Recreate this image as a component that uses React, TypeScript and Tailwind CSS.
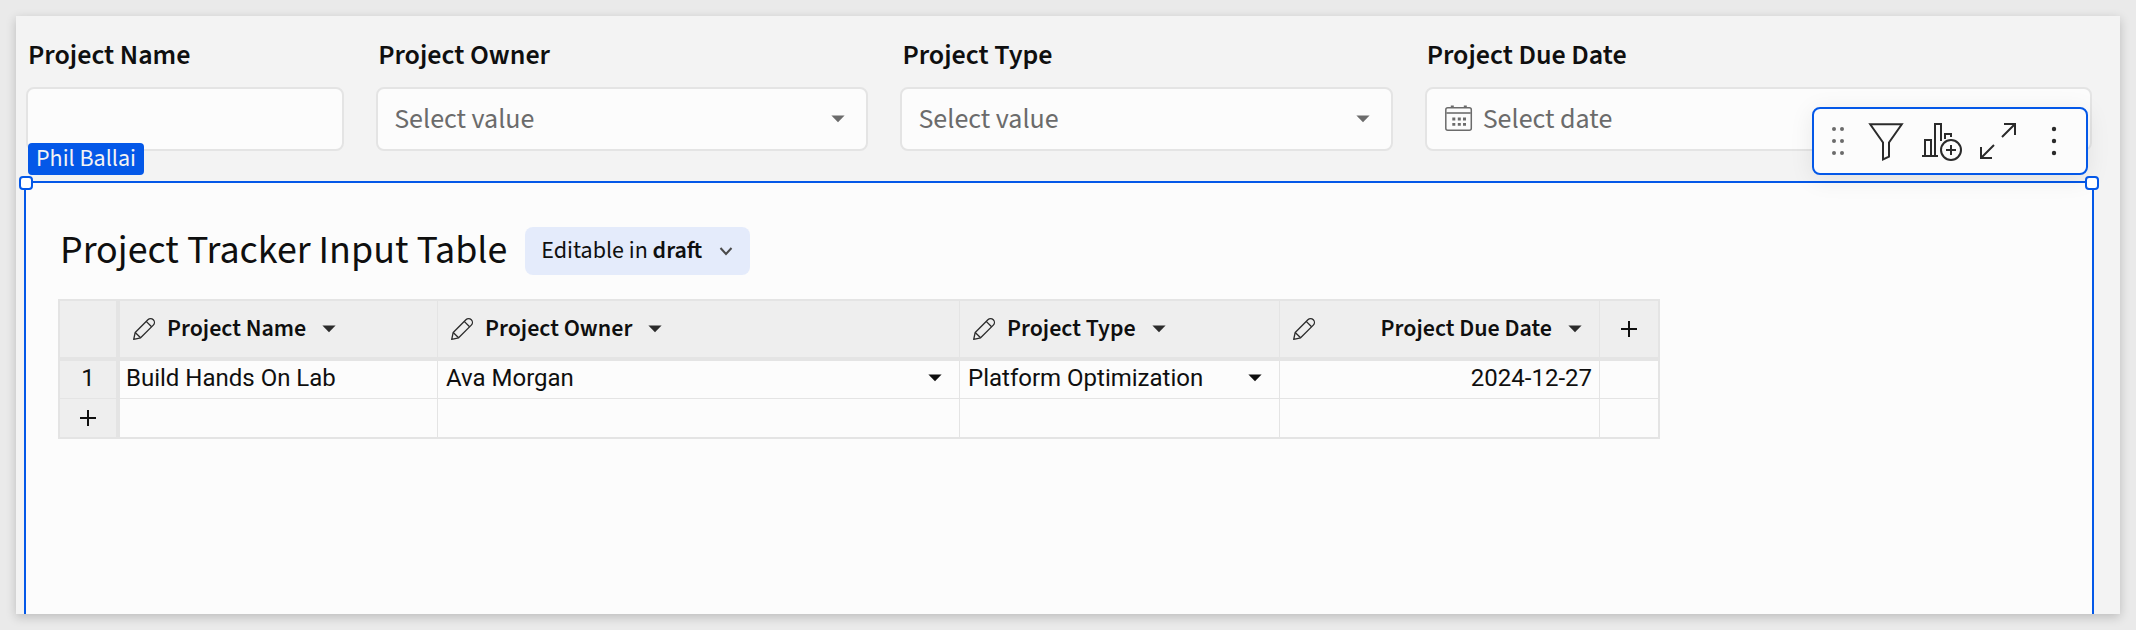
import type { ReactNode } from "react";

function Caret({ className = "" }: { className?: string }) {
  return (
    <svg viewBox="0 0 14 8" className={`h-2 w-3.5 shrink-0 ${className}`} aria-hidden="true">
      <path d="M.4 .5h13.2L7 7.3z" fill="currentColor" />
    </svg>
  );
}

function Pencil() {
  return (
    <svg viewBox="0 0 24 24" className="size-6 shrink-0 text-[#2b2b2b]" fill="none" stroke="currentColor" strokeWidth="1.3" strokeLinejoin="round" aria-hidden="true">
      <path d="M1.7 22.3l1.5-6.8L15.900 2.700a3.800 3.800 0 0 1 5.400 5.400L8.600 20.800z" />
      <path d="M3.200 15.500L8.600 20.800M14.200 4.400L19.600 9.800" />
    </svg>
  );
}

function Plus() {
  return (
    <svg viewBox="0 0 16 16" className="size-4" stroke="currentColor" strokeWidth="2" aria-hidden="true">
      <path d="M8 0v16M0 8h16" />
    </svg>
  );
}

function Calendar() {
  return (
    <svg viewBox="0 0 28 28" className="col-start-1 row-start-1 ml-5 size-7 text-[#6b6b6b]" fill="none" stroke="currentColor" aria-hidden="true">
      <rect x=".8" y="2.800" width="25.500" height="22.500" rx="2" strokeWidth="1.500" />
      <path d="M1 8h25" strokeWidth="2" stroke="#8a8a8a" />
      <path d="M7.300 .5v2M20.300 .5v2" strokeWidth="3" />
      <path d="M7.300 14h3M12.800 14h3M18 14h3M7.300 19.400h3M12.800 19.400h3M18 19.400h3" strokeWidth="2.800" />
    </svg>
  );
}

function Filter({ id, label, children }: { id: string; label: string; children: ReactNode }) {
  return (
    <div className="flex min-w-0 flex-col gap-3">
      <label htmlFor={id} className="pl-0.5 text-[28px] leading-10 font-semibold">
        {label}
      </label>
      <div className="grid grid-cols-1 items-center">{children}</div>
    </div>
  );
}

const box =
  "col-start-1 row-start-1 h-16 w-full appearance-none rounded-lg border-2 border-[#e4e4e4] bg-[#fcfcfc] text-[28px] text-[#6b6b6b] placeholder:text-[#6b6b6b] placeholder:opacity-100";

function SelectFilter({ id, label }: { id: string; label: string }) {
  return (
    <Filter id={id} label={label}>
      <select id={id} className={`${box} px-4`}>
        <option>Select value</option>
      </select>
      <Caret className="pointer-events-none col-start-1 row-start-1 mr-[23px] justify-self-end text-[#6b6b6b]" />
    </Filter>
  );
}

function ToolButton({ label, children }: { label: string; children: ReactNode }) {
  return (
    <button type="button" aria-label={label} className="flex h-16 w-14 items-center justify-center">
      <svg viewBox="0 0 40 40" className="size-10" fill="none" stroke="currentColor" strokeWidth="2">
        {children}
      </svg>
    </button>
  );
}

function Toolbar() {
  return (
    <div role="toolbar" aria-label="Element" className="absolute right-1 bottom-0 flex rounded-lg border-2 border-[#0458e8] bg-[#fcfcfc] px-1 text-[#2b2b2b] shadow-[0_4px_24px_rgba(0,0,0,0.08)]">
      <button type="button" aria-label="Drag" className="flex h-16 w-10 items-center justify-center text-[#6b6b6b]">
        <svg viewBox="0 0 12 28" className="h-7 w-3" fill="currentColor">
          <circle cx="2" cy="2" r="2" />
          <circle cx="10" cy="2" r="2" />
          <circle cx="2" cy="14" r="2" />
          <circle cx="10" cy="14" r="2" />
          <circle cx="2" cy="26" r="2" />
          <circle cx="10" cy="26" r="2" />
        </svg>
      </button>
      <ToolButton label="Filter">
        <path d="M4.200 3.200H35.800L23 21.500V35.700L17 38.400V21.500Z" />
      </ToolButton>
      <ToolButton label="Create chart">
        <path d="M0 35h16M3 35V19h6v16M13 35V3h6v17M23 18v-5h6v3" />
        <circle cx="29" cy="29" r="10" />
        <path d="M29 24v10M24 29h10" />
      </ToolButton>
      <ToolButton label="Maximize">
        <path d="M24 16L37 3M26 3h11v11M16 24L3 37M3 26v11h11" />
      </ToolButton>
      <ToolButton label="More">
        <g fill="currentColor" stroke="none">
          <circle cx="20" cy="8" r="2.200" />
          <circle cx="20" cy="20" r="2.200" />
          <circle cx="20" cy="32" r="2.200" />
        </g>
      </ToolButton>
    </div>
  );
}

const head = "h-[62px] border-t-2 border-b-4 border-[#e4e4e4] bg-[#eeeeee] p-0";
const cell = "border-[#e4e4e4] p-0 align-top";

function HeadCell({ name, right = false }: { name: string; right?: boolean }) {
  return (
    <th scope="col" className={`${head} border-r`}>
      <div className="flex items-center pl-3 text-left text-[24px] leading-8 font-semibold">
        <Pencil />
        <span className={right ? "mr-4 ml-auto" : "mr-4 ml-[11px]"}>{name}</span>
        <button type="button" aria-label={`${name} menu`} className={right ? "mr-[17px] text-[#2b2b2b]" : "text-[#2b2b2b]"}>
          <Caret />
        </button>
      </div>
    </th>
  );
}

function SelectCell({ label, value }: { label: string; value: string }) {
  return (
    <td className={`${cell} border-r border-b`}>
      <div className="grid grid-cols-1 items-center">
        <select aria-label={label} className="col-start-1 row-start-1 h-[34px] w-full appearance-none bg-transparent px-2">
          <option>{value}</option>
        </select>
        <Caret className="pointer-events-none col-start-1 row-start-1 mr-[17px] justify-self-end" />
      </div>
    </td>
  );
}

export default function App() {
  return (
    <div className="flex min-h-screen flex-col bg-[#eaeaea] p-4 font-['Source_Sans_3','Noto_Sans_CJK_SC',sans-serif] text-[#0f0f0f]">
      <main className="flex flex-1 flex-col bg-[#f3f3f3] pt-[19px] pr-[26px] pl-2 shadow-[0_3px_10px_rgba(0,0,0,0.2)]">
        <form className="grid grid-cols-[318fr_492fr_492fr_667fr] gap-8 px-0.5">
          <Filter id="name" label="Project Name">
            <input id="name" type="text" className={`${box} px-4`} />
          </Filter>
          <SelectFilter id="owner" label="Project Owner" />
          <SelectFilter id="type" label="Project Type" />
          <Filter id="due" label="Project Due Date">
            <input id="due" type="text" placeholder="Select date" className={`${box} pr-4 pl-14`} />
            <Calendar />
          </Filter>
        </form>

        <section className="relative mt-[30px] flex-1 border-2 border-b-0 border-[#0458e8] bg-[#fcfcfc] px-8 pt-11 pb-10">
          <span className="absolute -top-10 left-0.5 rounded bg-[#0458e8] px-2 text-[24px] leading-8 text-[#f3f3f3]">Phil Ballai</span>
          <span className="absolute -top-[7px] -left-[7px] size-3.5 rounded border-2 border-[#0458e8] bg-white" />
          <div className="absolute -top-2 right-0">
            <Toolbar />
          </div>
          <span className="absolute -top-[7px] -right-[7px] size-3.5 rounded border-2 border-[#0458e8] bg-white" />

          <div className="flex items-center gap-[18px] pl-0.5">
            <h1 className="text-[40px] leading-12 font-normal">Project Tracker Input Table</h1>
            <button type="button" className="flex h-12 items-center gap-4 rounded-lg bg-[#e4ebfb] px-4 text-[24px]">
              <span>
                Editable in <b className="font-semibold">draft</b>
              </span>
              <svg viewBox="0 0 16 16" className="size-4 text-[#4a4a4a]" fill="none" stroke="currentColor" strokeWidth="2" aria-hidden="true">
                <path d="M2.500 5L8 11l5.500-6" />
              </svg>
            </button>
          </div>

          <table className="mt-6 w-[1602px] table-fixed border-separate border-spacing-0 font-[Roboto,sans-serif] text-[24px] leading-[34px]">
            <colgroup>
              <col className="w-[62px]" />
              <col className="w-[318px]" />
              <col className="w-[522px]" />
              <col className="w-[320px]" />
              <col className="w-[320px]" />
              <col className="w-[60px]" />
            </colgroup>
            <thead className="font-['Source_Sans_3','Noto_Sans_CJK_SC',sans-serif]">
              <tr>
                <td className={`${head} border-r-4 border-l-2`} />
                <HeadCell name="Project Name" />
                <HeadCell name="Project Owner" />
                <HeadCell name="Project Type" />
                <HeadCell name="Project Due Date" right />
                <th className={`${head} border-r-2`}>
                  <button type="button" aria-label="Add column" className="mx-auto block">
                    <Plus />
                  </button>
                </th>
              </tr>
            </thead>
            <tbody>
              <tr className="h-[38px]">
                <th scope="row" className={`${cell} border-r-4 border-b border-l-2 bg-[#eeeeee] font-normal`}>1</th>
                <td className={`${cell} border-r border-b pl-1.5`}>Build Hands On Lab</td>
                <SelectCell label="Project Owner" value="Ava Morgan" />
                <SelectCell label="Project Type" value="Platform Optimization" />
                <td className={`${cell} border-r border-b pr-[7px] text-right`}>2024-12-27</td>
                <td className={`${cell} border-r-2 border-b`} />
              </tr>
              <tr className="h-10">
                <th className="border-r-4 border-b-2 border-l-2 border-[#e4e4e4] bg-[#eeeeee] p-0">
                  <button type="button" aria-label="Add row" className="mx-auto block">
                    <Plus />
                  </button>
                </th>
                <td className={`${cell} border-r border-b-2`} />
                <td className={`${cell} border-r border-b-2`} />
                <td className={`${cell} border-r border-b-2`} />
                <td className={`${cell} border-r border-b-2`} />
                <td className={`${cell} border-r-2 border-b-2`} />
              </tr>
            </tbody>
          </table>
        </section>
      </main>
    </div>
  );
}
